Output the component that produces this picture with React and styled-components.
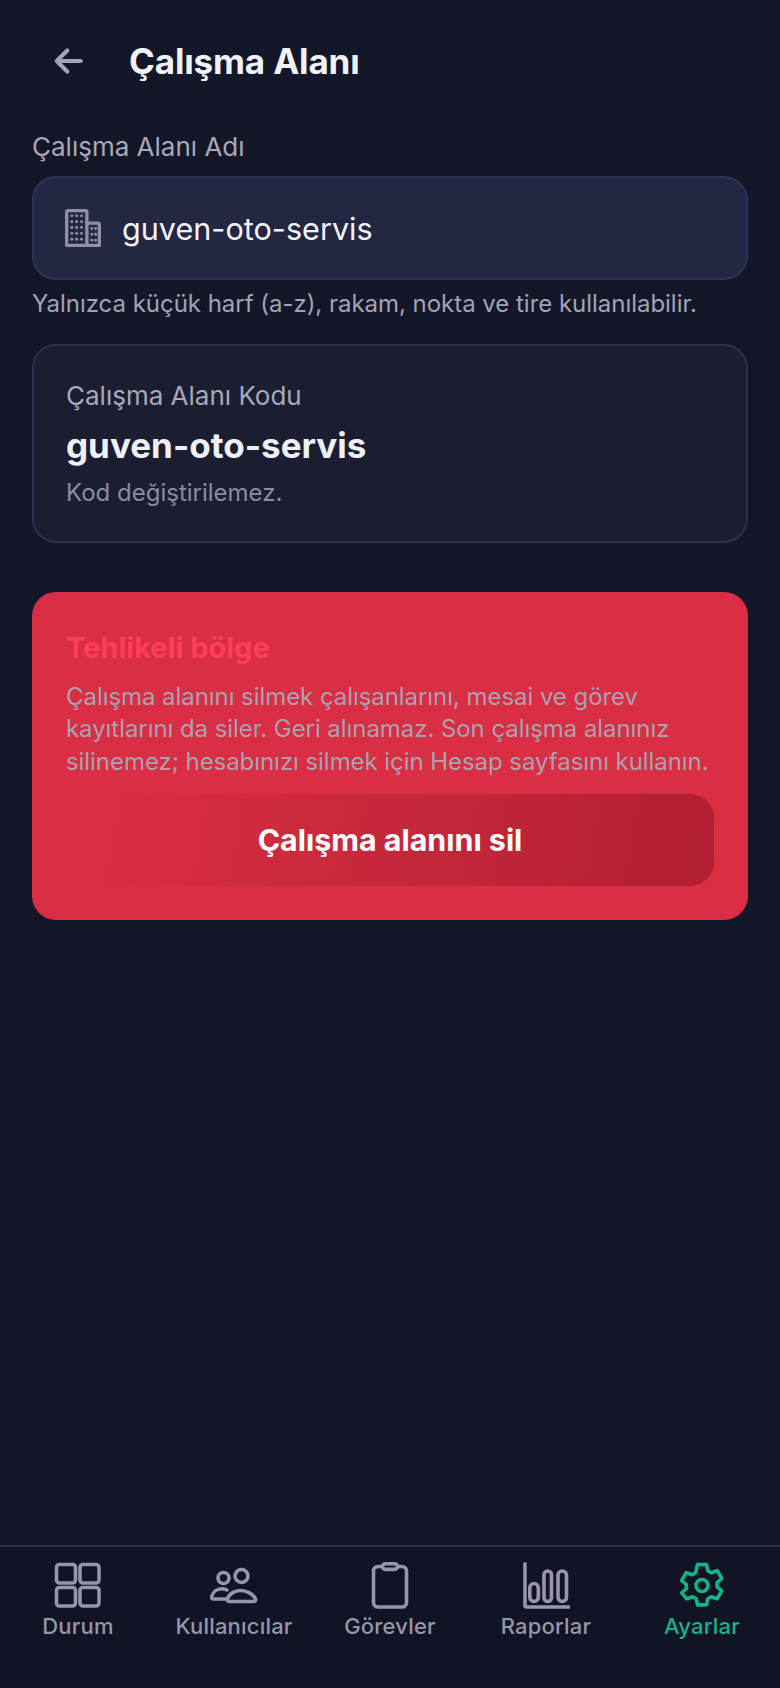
import React from "react";
import styled, { createGlobalStyle } from "styled-components";

const Global = createGlobalStyle`
  html, body { margin: 0; padding: 0; background: #141728; }
  * { box-sizing: border-box; }
`;
const Screen = styled.div`
  width: 780px; height: 1688px; display: flex; flex-direction: column;
  background: #141728; font-family: Inter, "Noto Sans", sans-serif; color: #eef0fa;
`;
const Main = styled.main`
  flex: 1; display: flex; flex-direction: column; padding: 0 32px;
`;
const Header = styled.header`
  height: 122px; display: flex; align-items: center; gap: 43px; padding-left: 18px;
`;
const BackIcon = styled.svg`
  width: 36px; height: 36px; flex: none; color: #a5a3b8;
`;
const Title = styled.h1`
  margin: 0; font-size: 35px; font-weight: 700; letter-spacing: -0.15px; color: #f1f3fc;
`;
const FieldLabel = styled.label`
  display: block; font-size: 26px; line-height: 34px; margin-top: 8px; margin-bottom: 12px; color: #a9a8bb;
`;
const InputBox = styled.div`
  height: 104px; display: flex; align-items: center; gap: 21px; padding: 0 22px 0 31px;
  background: #242742; border: 2px solid #2f3256; border-radius: 24px;
`;
const BuildingIcon = styled.svg`
  width: 36px; height: 38px; flex: none; color: #908fab;
`;
const InputText = styled.span`
  font-size: 30.6px; line-height: 40px; padding-top: 2px; color: #f1f3fc;
`;
const Hint = styled.p`
  margin: 8px 0 0; font-size: 24px; line-height: 32px; letter-spacing: -0.03px; color: #a3a2b6;
`;
const CodeCard = styled.section`
  margin-top: 24px; height: 199px; padding: 33px 32px; background: #1b1e31;
  border: 2px solid #2c2f4e; border-radius: 24px;
`;
const CodeLabel = styled.div`
  font-size: 26px; line-height: 34px; color: #a9a8bb;
`;
const CodeValue = styled.div`
  font-size: 35px; line-height: 44px; margin-top: 10px; font-weight: 700; color: #eef0fa;
`;
const CodeNote = styled.div`
  font-size: 24px; line-height: 30px; margin-top: 11px; color: #8c8ba0;
`;
const Danger = styled.section`
  margin-top: 49px; height: 328px; padding: 38px 34px 0; background: #d92e43; border-radius: 24px;
`;
const DangerTitle = styled.h2`
  margin: 0; font-size: 29px; line-height: 36px; font-weight: 700; color: #ff3d58;
`;
const DangerText = styled.p`
  margin: 15px 0 0; font-size: 24px; line-height: 32.4px; letter-spacing: -0.06px; color: #a9a1b2;
`;
const DangerButton = styled.button`
  display: block; width: 100%; height: 92px; margin-top: 16px; border: 0; border-radius: 24px;
  background: linear-gradient(100deg, #d92e43 0%, #d92e43 8%, #b11f30 100%);
  font: 700 30.4px Inter, sans-serif; color: #fff;
`;
const Nav = styled.nav`
  height: 143px; display: grid; grid-template-columns: repeat(5, 1fr); align-items: start;
  padding-top: 15px; background: #111425; border-top: 2px solid #2d3054;
`;
const NavItem = styled.div`
  display: flex; flex-direction: column; align-items: center; gap: 1px;
  color: ${p => (p.$active ? "#12b586" : "#9695aa")};
`;
const NavIcon = styled.svg`
  width: 48px; height: 48px; display: block;
`;
const NavLabel = styled.span`
  font-size: 22px; line-height: 30px; font-weight: 500; letter-spacing: 0.2px;
`;

const Icon = ({ children }) => (
  <NavIcon viewBox="0 0 48 48" fill="none" stroke="currentColor" strokeWidth="3.6" strokeLinecap="round" strokeLinejoin="round">
    {children}
  </NavIcon>
);

export default function App() {
  return (
    <Screen>
      <Global />
      <Main>
        <Header>
          <BackIcon viewBox="0 0 24 24" fill="none" stroke="currentColor" strokeWidth="2.8" strokeLinecap="round" strokeLinejoin="round">
            <path d="M20.500 12H5M11.500 5L4.500 12l7 7" />
          </BackIcon>
          <Title>Çalışma Alanı</Title>
        </Header>
        <FieldLabel>Çalışma Alanı Adı</FieldLabel>
        <InputBox>
          <BuildingIcon viewBox="0 0 37 39" fill="none" stroke="currentColor" strokeWidth="3.4" strokeLinejoin="round">
            <path d="M1.700 37.300V3.200A1.500 1.500 0 0 1 3.200 1.700h17.800A1.500 1.500 0 0 1 22.500 3.200v34.100Z" />
            <path d="M22.500 14.500h11.300a1.500 1.500 0 0 1 1.500 1.500v21.300h-12.800" />
            <g stroke="none" fill="currentColor">
              {[7, 13, 19, 25, 31].map(y => [7, 12, 17].map(x => <circle key={x + "-" + y} cx={x} cy={y} r="1.500" />))}
              {[20, 26, 32].map(y => [27.500, 31.500].map(x => <circle key={x + "-" + y} cx={x} cy={y} r="1.500" />))}
            </g>
          </BuildingIcon>
          <InputText>guven-oto-servis</InputText>
        </InputBox>
        <Hint>Yalnızca küçük harf (a-z), rakam, nokta ve tire kullanılabilir.</Hint>
        <CodeCard>
          <CodeLabel>Çalışma Alanı Kodu</CodeLabel>
          <CodeValue>guven-oto-servis</CodeValue>
          <CodeNote>Kod değiştirilemez.</CodeNote>
        </CodeCard>
        <Danger>
          <DangerTitle>Tehlikeli bölge</DangerTitle>
          <DangerText>
            Çalışma alanını silmek çalışanlarını, mesai ve görev kayıtlarını da siler. Geri alınamaz. Son çalışma alanınız silinemez; hesabınızı silmek için Hesap sayfasını kullanın.
          </DangerText>
          <DangerButton>Çalışma alanını sil</DangerButton>
        </Danger>
      </Main>
      <Nav>
        <NavItem>
          <Icon>
            <rect x="2.500" y="2.500" width="19" height="18.500" rx="3" />
            <rect x="26" y="2.500" width="19" height="18.500" rx="3" />
            <rect x="2.500" y="25.500" width="19" height="18.500" rx="3" />
            <rect x="26" y="25.500" width="19" height="18.500" rx="3" />
          </Icon>
          <NavLabel>Durum</NavLabel>
        </NavItem>
        <NavItem>
          <Icon>
            <circle cx="13.500" cy="16" r="5.500" />
            <circle cx="31.500" cy="14" r="6.500" />
            <path d="M17 28c-1.500-.8-3-1.200-5-1.200C7 26.800 3 30 1.700 34.500c-.4 1.500.5 2.500 1.800 2.500H17" />
            <path d="M19.500 39.500c-1.500 0-2.500-1-2-2.500 1.500-5 7-8.500 13-8.500S43.500 32 45.500 37c.5 1.500-.5 2.500-2 2.500Z" />
          </Icon>
          <NavLabel>Kullanıcılar</NavLabel>
        </NavItem>
        <NavItem>
          <Icon>
            <path d="M16 4.500h-4a4.500 4.500 0 0 0-4.500 4.500v31.500a4.500 4.500 0 0 0 4.500 4.500h24a4.500 4.500 0 0 0 4.500-4.500V9A4.500 4.500 0 0 0 36 4.500h-4" />
            <rect x="16.500" y="1.800" width="15" height="5.600" rx="2.800" />
          </Icon>
          <NavLabel>Görevler</NavLabel>
        </NavItem>
        <NavItem>
          <Icon>
            <path d="M3 1.800V43.500a1.500 1.500 0 0 0 1.500 1.500h42.500" />
            <rect x="7.800" y="21.500" width="8.500" height="18" rx="4.250" />
            <rect x="22" y="9" width="7.500" height="30.500" rx="3.750" />
            <rect x="36" y="9" width="8.500" height="30.500" rx="4.250" />
          </Icon>
          <NavLabel>Raporlar</NavLabel>
        </NavItem>
        <NavItem $active>
          <Icon>
            <circle cx="24" cy="23.500" r="6" />
            <path d="M19.500 2.500h9l1.300 6.200 3.500 2 6-2 4.500 7.800-4.700 4.200v4l4.700 4.200-4.500 7.800-6-2-3.500 2-1.300 6.200h-9l-1.300-6.200-3.500-2-6 2L3.700 30.900l4.700-4.200v-4l-4.700-4.200 4.500-7.800 6 2 3.500-2Z" />
          </Icon>
          <NavLabel>Ayarlar</NavLabel>
        </NavItem>
      </Nav>
    </Screen>
  );
}
